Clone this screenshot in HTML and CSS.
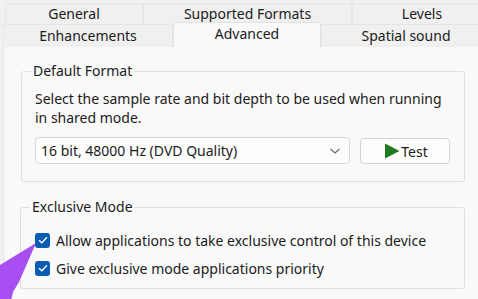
FILE: index.html
```html
<!DOCTYPE html>
<html>
  <head>
    <title>Sound Properties - Advanced</title>
    <link rel="stylesheet" href="styles.css">
  </head>
  <body>
    <div class="dialog">
      <div class="tabs">
        <div class="tab-row tab-row-back">
          <div class="tab tab-general">General</div>
          <div class="tab tab-formats">Supported Formats</div>
          <div class="tab tab-levels">Levels</div>
        </div>
        <div class="tab-row tab-row-front">
          <div class="tab tab-enh">Enhancements</div>
          <div class="tab tab-adv active">Advanced</div>
          <div class="tab tab-spatial">Spatial sound</div>
        </div>
      </div>

      <div class="panel">
        <fieldset class="group group-format">
          <legend>Default Format</legend>
          <p class="hint">Select the sample rate and bit depth to be used when running<br>in shared mode.</p>
          <div class="format-row">
            <div class="select">
              <span>16 bit, 48000 Hz (DVD Quality)</span>
              <svg class="chevron" width="12" height="8" viewBox="0 0 12 8">
                <path d="M1.5 2 L6 6 L10.5 2" fill="none" stroke="#6a6a6a" stroke-width="1.2"/>
              </svg>
            </div>
            <button class="btn-test">
              <svg width="16" height="16" viewBox="0 0 16 16">
                <path d="M1 0.5 L15.5 8 L1 15.5 Z" fill="#1f7a1f"/>
              </svg>
              Test
            </button>
          </div>
        </fieldset>

        <fieldset class="group group-exclusive">
          <legend>Exclusive Mode</legend>
          <label class="check">
            <span class="box">
              <svg width="10" height="8" viewBox="0 0 10 8">
                <path d="M1 4.2 L3.8 6.8 L9 1.2" fill="none" stroke="#fff" stroke-width="1.3"/>
              </svg>
            </span>
            Allow applications to take exclusive control of this device
          </label>
          <label class="check">
            <span class="box">
              <svg width="10" height="8" viewBox="0 0 10 8">
                <path d="M1 4.2 L3.8 6.8 L9 1.2" fill="none" stroke="#fff" stroke-width="1.3"/>
              </svg>
            </span>
            Give exclusive mode applications priority
          </label>
        </fieldset>
      </div>

      <svg class="pointer" width="40" height="60" viewBox="0 0 40 60">
        <polygon points="36,1 0,23 0,59 11,59 13,50 19,40" fill="#a84ff3"/>
      </svg>
    </div>
  </body>
</html>
```

FILE: styles.css
```css
body {
  margin: 0;
  background-color: #f1f1f1;
  font-family: "Noto Sans", "Open Sans", sans-serif;
  font-size: 14px;
  color: #1b1b1b;
  overflow: hidden;
}

.dialog {
  position: relative;
  width: 478px;
  height: 299px;
  overflow: hidden;
}

.tabs {
  padding-top: 3px;
}

.tab-row {
  display: flex;
  height: 21px;
  line-height: 18px;
}

.tab-row-back {
  padding-left: 5px;
}

.tab-row-front {
  padding-left: 3px;
  height: 23px;
}

.tab {
  flex: none;
  display: flex;
  align-items: center;
  justify-content: center;
  box-sizing: border-box;
  background-color: #f0f0f0;
  border: 1px solid #e6e6e6;
  border-bottom: none;
  white-space: nowrap;
}

.tab-general {
  width: 138px;
}

.tab-formats {
  width: 209px;
}

.tab-levels {
  width: 140px;
}

.tab-enh {
  width: 170px;
}

.tab-adv {
  width: 148px;
}

.tab-spatial {
  width: 170px;
}

.tab.active {
  background-color: #f9f9f9;
  margin-top: -2px;
  height: 25px;
  position: relative;
  border-color: #e2e2e2;
  padding-bottom: 2px;
}

.panel {
  margin-left: 3px;
  background-color: #f9f9f9;
  border-left: 1px solid #e6e6e6;
  padding: 15px 0 20px 17px;
  height: 260px;
}

.group {
  margin: 0;
  width: 444px;
  box-sizing: border-box;
  border: 1px solid #e0e0e0;
  border-radius: 3px;
  padding: 0 13px;
}

.group legend {
  padding: 0 2px;
  margin-left: -4px;
  line-height: 18px;
}

.group-format {
  padding-top: 9px;
  padding-bottom: 17px;
}

.hint {
  margin: 0;
  line-height: 19px;
  white-space: nowrap;
}

.format-row {
  display: flex;
  gap: 10px;
  margin-top: 10px;
}

.select {
  width: 315px;
  height: 27px;
  box-sizing: border-box;
  display: flex;
  align-items: center;
  justify-content: space-between;
  padding: 0 8px 0 5px;
  background-color: #fdfdfd;
  border: 1px solid #d9d9d9;
  border-radius: 4px;
}

.btn-test {
  width: 90px;
  height: 26px;
  margin-top: 1px;
  display: flex;
  align-items: center;
  justify-content: center;
  gap: 1px;
  padding: 0 0 0 2px;
  font: inherit;
  color: inherit;
  background-color: #fdfdfd;
  border: 1px solid #d3d3d3;
  border-radius: 4px;
}

.group-exclusive {
  margin-top: 16px;
  margin-left: -1px;
  width: 445px;
  padding-top: 10px;
  padding-bottom: 6px;
}

.check {
  display: flex;
  align-items: center;
  height: 28px;
  gap: 6px;
  padding-left: 1px;
}

.check .box {
  width: 15px;
  height: 15px;
  box-sizing: border-box;
  border-radius: 3px;
  background-color: #0b5cb3;
  display: flex;
  align-items: center;
  justify-content: center;
}

.pointer {
  position: absolute;
  left: 0;
  top: 242px;
}
```
